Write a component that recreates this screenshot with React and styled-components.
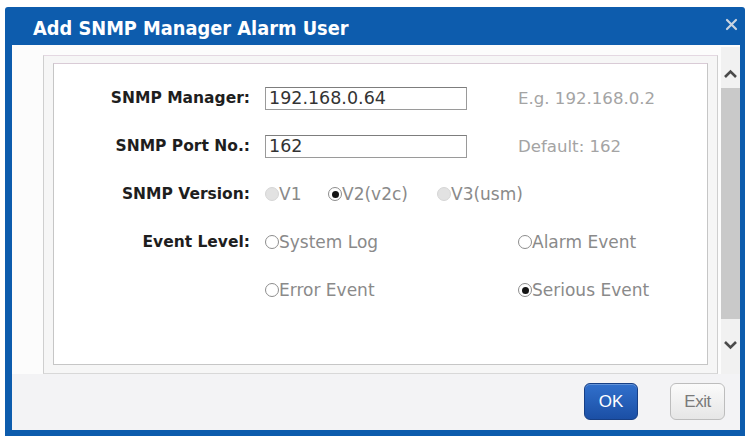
import React from "react";
import styled, { createGlobalStyle } from "styled-components";

const Global = createGlobalStyle`
  html, body { margin: 0; padding: 0; background: #ffffff; }
  body { font-family: "DejaVu Sans", Verdana, sans-serif; }
  * { box-sizing: border-box; }
`;

const Page = styled.div`
  width: 751px;
  height: 437px;
  padding: 7px 5px 1px 5px;
  background: #ffffff;
`;

const Dialog = styled.div`
  width: 740px;
  height: 429px;
  display: flex;
  flex-direction: column;
  background: #0d5cad;
  border-radius: 3px 3px 0 0;
  padding: 0 5px 6px 7px;
`;

const TitleBar = styled.div`
  height: 38px;
  flex: none;
  display: flex;
  align-items: center;
  justify-content: space-between;
  padding: 0 2px 0 21px;
`;

const Title = styled.div`
  color: #ffffff;
  font-family: "DejaVu Sans Condensed", "DejaVu Sans", sans-serif;
  font-weight: bold;
  font-size: 19.8px;
  padding-top: 4px;
`;

const Close = styled.div`
  width: 14px;
  height: 14px;
  display: flex;
  align-items: center;
  justify-content: center;
  margin-top: -4px;
`;

const Body = styled.div`
  flex: 1;
  display: flex;
  flex-direction: column;
  background: #f3f3f5;
`;

const Main = styled.div`
  height: 329px;
  display: flex;
  background: #fcfcfc;
  padding: 2px 0 0 31px;
`;

const OuterPanel = styled.div`
  width: 675px;
  margin-top: 8px;
  border-top: 1px solid #e4d8e2;
  border-left: 1px solid #cfcfcf;
  border-right: 1px solid #cfcfcf;
  border-bottom: 1px solid #d8d8d8;
  background: #f6f6f6;
  padding: 7px 9px 8px 9px;
`;

const InnerPanel = styled.div`
  height: 100%;
  background: #ffffff;
  border: 1px solid #c6c6c6;
  border-top-color: #d9cbd6;
  display: grid;
  grid-template-columns: 196px 238px 1fr;
  grid-auto-rows: 48px;
  column-gap: 15px;
  align-items: center;
  align-content: start;
  padding-top: 10px;
`;

const Label = styled.div`
  font-family: "DejaVu Sans", Verdana, sans-serif;
  font-weight: bold;
  font-size: 15.5px;
  color: #1e1e1e;
  text-align: right;
`;

const Input = styled.div`
  width: 202px;
  height: 23px;
  border: 1px solid #9a9a9a;
  border-top-color: #7d7d7d;
  background: #ffffff;
  font-size: 17.5px;
  color: #333;
  padding: 0 0 0 3px;
  line-height: 21px;
`;

const Hint = styled.div`
  font-size: 16.6px;
  color: #a4a4a4;
`;

const Empty = styled.div``;

const RadioGroup = styled.div`
  grid-column: ${(p) => p.$span || "auto"};
  display: flex;
  align-items: center;
`;

const RadioItem = styled.label`
  display: flex;
  align-items: center;
  font-size: 17px;
  color: #8a8a8a;
  width: ${(p) => (p.$w ? p.$w + "px" : "auto")};
`;

const Circle = styled.span`
  width: 14px;
  height: 14px;
  border-radius: 50%;
  flex: none;
  border: 1px solid ${(p) => (p.$disabled ? "#d6d6d6" : "#8d8d8d")};
  background: ${(p) => (p.$disabled ? "#e2e2e2" : "#ffffff")};
  display: flex;
  align-items: center;
  justify-content: center;
  &::after {
    content: "";
    width: 7px;
    height: 7px;
    border-radius: 50%;
    background: #151515;
    display: ${(p) => (p.$checked ? "block" : "none")};
  }
`;

const ScrollBar = styled.div`
  width: 19px;
  margin-left: 3px;
  display: flex;
  flex-direction: column;
  background: #f1f1f1;
`;

const ScrollArrow = styled.div`
  height: ${(p) => p.$h}px;
  display: flex;
  align-items: center;
  justify-content: center;
  padding: ${(p) => p.$pad};
`;

const ScrollThumb = styled.div`
  flex: 1;
  background: #c9c9c9;
`;

const Footer = styled.div`
  flex: 1;
  display: flex;
  justify-content: flex-end;
  align-items: flex-start;
  padding: 9px 15px 0 0;
  gap: 32px;
`;

const Button = styled.button`
  height: 37px;
  width: ${(p) => p.$w}px;
  border-radius: 6px;
  font-family: "Liberation Sans", Arial, sans-serif;
  font-size: 17px;
  padding: 0;
  cursor: pointer;
  ${(p) =>
    p.$primary
      ? `
    background: linear-gradient(#3170cc, #1b4fa5);
    border: 1px solid #173f85;
    color: #ffffff;
    box-shadow: inset 0 1px 0 rgba(255,255,255,0.25);
  `
      : `
    background: linear-gradient(#fbfbfb, #e6e6e6);
    border: 1px solid #bdbdbd;
    color: #7a7a7a;
    letter-spacing: -0.5px;
  `}
`;

const Radio = ({ children, checked, disabled, w }) => (
  <RadioItem $w={w}>
    <Circle $checked={checked} $disabled={disabled} />
    {children}
  </RadioItem>
);

export default function App() {
  return (
    <Page>
      <Global />
      <Dialog>
        <TitleBar>
          <Title>Add SNMP Manager Alarm User</Title>
          <Close>
            <svg width="13" height="13" viewBox="0 0 13 13">
              <path d="M2 2 L11 11 M11 2 L2 11" stroke="#c9d3e0" strokeWidth="2.2" strokeLinecap="round" />
            </svg>
          </Close>
        </TitleBar>
        <Body>
          <Main>
            <OuterPanel>
              <InnerPanel>
                <Label>SNMP Manager:</Label>
                <Input>192.168.0.64</Input>
                <Hint>E.g. 192.168.0.2</Hint>

                <Label>SNMP Port No.:</Label>
                <Input>162</Input>
                <Hint>Default: 162</Hint>

                <Label>SNMP Version:</Label>
                <RadioGroup $span="2 / span 2">
                  <Radio disabled w={63}>V1</Radio>
                  <Radio checked w={109}>V2(v2c)</Radio>
                  <Radio disabled>V3(usm)</Radio>
                </RadioGroup>

                <Label>Event Level:</Label>
                <RadioGroup>
                  <Radio>System Log</Radio>
                </RadioGroup>
                <RadioGroup>
                  <Radio>Alarm Event</Radio>
                </RadioGroup>

                <Empty />
                <RadioGroup>
                  <Radio>Error Event</Radio>
                </RadioGroup>
                <RadioGroup>
                  <Radio checked>Serious Event</Radio>
                </RadioGroup>
              </InnerPanel>
            </OuterPanel>
            <ScrollBar>
              <ScrollArrow $h={41} $pad="12px 0 0 0">
                <svg width="15" height="10" viewBox="0 0 15 10">
                  <path d="M2 8 L7.5 2.5 L13 8" fill="none" stroke="#4a4a4a" strokeWidth="2.6" />
                </svg>
              </ScrollArrow>
              <ScrollThumb />
              <ScrollArrow $h={55} $pad="0 0 4px 0">
                <svg width="15" height="10" viewBox="0 0 15 10">
                  <path d="M2 2 L7.5 7.5 L13 2" fill="none" stroke="#4a4a4a" strokeWidth="2.6" />
                </svg>
              </ScrollArrow>
            </ScrollBar>
          </Main>
          <Footer>
            <Button $primary $w={54}>OK</Button>
            <Button $w={55}>Exit</Button>
          </Footer>
        </Body>
      </Dialog>
    </Page>
  );
}
